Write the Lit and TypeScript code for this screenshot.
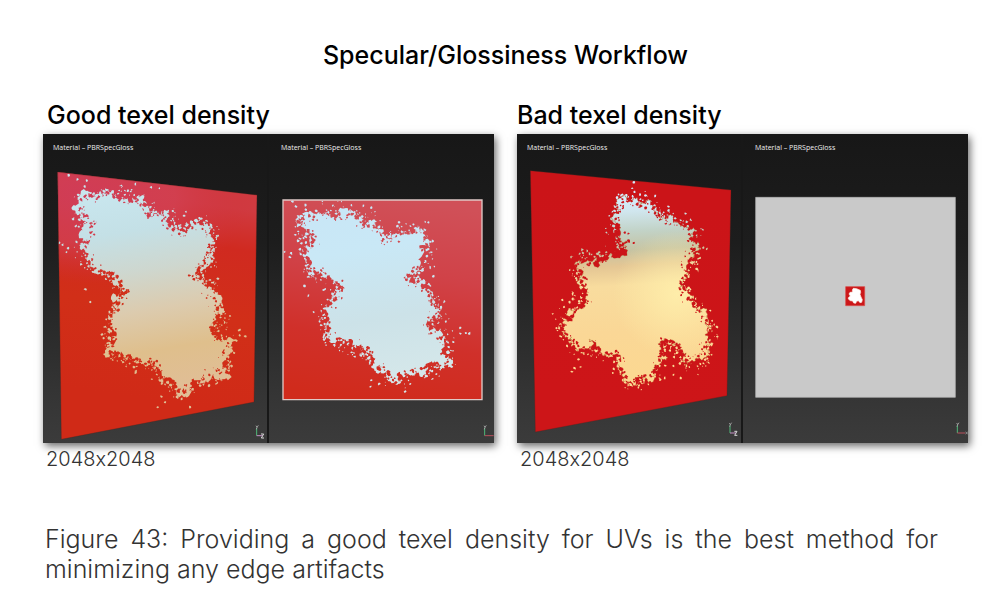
import { LitElement, html, svg, css } from "lit";
import { customElement, property } from "lit/decorators.js";

type Point = [number, number];

interface Scene {
  id: string;
  viewBox: string;
  label: string;
  surface: Point[];
  outline: Point[];
  specks: Point[];
  seed: number;
  axis: Point;
  axisLength: number;
  flat: boolean;
  soft: boolean;
}

// Small seeded generator, so that the splatter is the same on every load.
function randomFrom(seed: number): () => number {
  let s = seed;
  return () => {
    s = (s * 1664525 + 1013904223) % 4294967296;
    return s / 4294967296;
  };
}

// Breaks each side of a polygon into ever smaller jagged pieces.
function roughen(points: Point[], rnd: () => number, levels: number, amount: number): Point[] {
  let result = points;
  for (let level = 0; level < levels; level++) {
    const next: Point[] = [];
    result.forEach((a, i) => {
      const b = result[(i + 1) % result.length];
      const dx = b[0] - a[0];
      const dy = b[1] - a[1];
      const k = (rnd() - 0.5) * amount;
      next.push(a, [(a[0] + b[0]) / 2 - dy * k, (a[1] + b[1]) / 2 + dx * k]);
    });
    result = next;
  }
  return result;
}

const toPath = (points: Point[]) =>
  "M" + points.map((p) => p[0].toFixed(1) + " " + p[1].toFixed(1)).join("L") + "Z";

function blob(x: number, y: number, r: number, rnd: () => number): string {
  const corners: Point[] = [];
  for (let i = 0; i < 6; i++) {
    const a = (i / 6) * Math.PI * 2;
    const d = r * (0.5 + rnd() * 0.9);
    corners.push([x + Math.cos(a) * d, y + Math.sin(a) * d]);
  }
  return toPath(corners);
}

// Crumbs thrown off the outline: outside ones add paint, inside ones remove it.
function crumbs(points: Point[], rnd: () => number, perSide: number, inward: boolean): string {
  let d = "";
  points.forEach((a, i) => {
    const b = points[(i + 1) % points.length];
    const dx = b[0] - a[0];
    const dy = b[1] - a[1];
    const len = Math.hypot(dx, dy) || 1;
    const spread = 0.4 + rnd();
    for (let n = 0; n < perSide * (len / 30); n++) {
      const t = rnd();
      const far = rnd() ** 2.2 * (inward ? 20 : 32) * spread;
      const side = inward ? -1 : 1;
      const x = a[0] + dx * t + (dy / len) * far * side;
      const y = a[1] + dy * t - (dx / len) * far * side;
      const near = Math.max(0, 1 - far / 18);
      d += blob(x, y, 1.3 + rnd() ** 1.6 * (inward ? 2.6 : 2.4) + near * rnd() * 3.4, rnd);
    }
  });
  return d;
}

const goodTilted: Scene = {
  id: "good-tilted",
  viewBox: "9 198 672 861",
  label: "Perspective view of the splatter at good texel density",
  surface: [[53, 246], [651, 315], [642, 936], [64, 1048]],
  outline: [
    [108, 332], [150, 308], [156, 322], [180, 318], [184, 306], [210, 302], [240, 322], [250, 334], [290, 322],
    [315, 345], [324, 372], [345, 375], [370, 365], [385, 408], [410, 424], [440, 418], [452, 402], [490, 398],
    [515, 408], [518, 450], [510, 500], [500, 530], [470, 537], [480, 548], [450, 565], [490, 562], [500, 590],
    [525, 610], [530, 650], [550, 665], [530, 695], [515, 700], [520, 725], [550, 740], [570, 770], [562, 800],
    [565, 850], [520, 852], [490, 870], [450, 892], [430, 920], [405, 900], [400, 880], [360, 868], [348, 828],
    [336, 815], [310, 822], [290, 815], [260, 795], [230, 798], [210, 802], [215, 740], [205, 680], [235, 655],
    [240, 610], [268, 605], [245, 595], [230, 560], [180, 545], [150, 540], [145, 490], [130, 455], [152, 450],
    [150, 390], [120, 370],
  ],
  specks: [
    [85, 256], [112, 268], [140, 272], [134, 290], [58, 458], [68, 464], [80, 486], [84, 474], [110, 456],
    [136, 598], [150, 636], [186, 734], [190, 745], [286, 282], [333, 292], [358, 295], [438, 365], [432, 378],
    [482, 386], [530, 438], [534, 566], [598, 720], [600, 736], [616, 738], [588, 752], [574, 828], [582, 788],
    [376, 938], [354, 952], [450, 952], [508, 888], [364, 920], [282, 830], [286, 848],
    [100, 386], [116, 410], [126, 424], [108, 408], [136, 398], [128, 440], [118, 390],
  ],
  seed: 11,
  axis: [650, 1037],
  axisLength: 18,
  flat: false,
  soft: false,
};

const goodFlat: Scene = {
  id: "good-flat",
  viewBox: "27 198 675 861",
  label: "UV view of the splatter at good texel density",
  surface: [[69, 330], [666, 330], [666, 929], [69, 929]],
  outline: [
    [113, 395], [135, 372], [158, 376], [175, 380], [178, 366], [205, 362], [235, 382], [280, 370], [296, 380],
    [305, 402], [345, 405], [358, 420], [365, 440], [400, 442], [425, 432], [440, 425], [480, 420], [497, 428],
    [503, 470], [490, 535], [455, 540], [465, 552], [435, 566], [480, 565], [490, 595], [515, 610], [515, 640],
    [543, 655], [520, 685], [505, 690], [510, 712], [545, 740], [568, 760], [562, 800], [565, 832], [536, 828],
    [500, 830], [470, 846], [440, 850], [405, 880], [385, 850], [335, 828], [326, 790], [312, 772], [290, 785],
    [250, 750], [195, 752], [205, 700], [188, 655], [220, 635], [225, 605], [252, 600], [220, 580], [195, 550],
    [145, 545], [140, 500], [130, 480], [156, 478], [152, 440], [138, 412],
  ],
  specks: [
    [97, 335], [108, 350], [136, 346], [138, 358], [74, 486], [90, 502], [94, 490], [120, 478], [134, 588],
    [145, 617], [178, 694], [184, 706], [274, 345], [310, 348], [334, 352], [418, 396], [412, 408], [466, 414],
    [518, 453], [520, 558], [601, 714], [600, 730], [618, 728], [628, 730], [580, 756], [576, 814], [334, 870],
    [332, 890], [358, 882], [435, 905], [498, 858], [284, 800],
    [106, 434], [120, 446], [114, 452], [136, 440], [124, 460], [138, 458],
  ],
  seed: 11,
  axis: [674, 1037],
  axisLength: 27,
  flat: true,
  soft: false,
};

const badTilted: Scene = {
  id: "bad-tilted",
  viewBox: "21 201 672 861",
  label: "Perspective view of the splatter at bad texel density",
  surface: [[61, 245], [663, 303], [651, 920], [76, 1029]],
  outline: [
    [320, 345], [345, 322], [365, 335], [390, 350], [405, 345], [425, 342], [440, 370], [455, 392], [470, 382],
    [505, 395], [520, 410], [540, 415], [540, 440], [560, 460], [550, 490], [540, 520], [535, 550], [512, 580],
    [525, 600], [540, 630], [565, 660], [590, 680], [590, 710], [606, 730], [595, 760], [590, 800], [545, 830],
    [515, 810], [510, 780], [470, 755], [455, 790], [445, 830], [430, 862], [395, 866], [375, 890], [350, 880],
    [335, 850], [326, 800], [300, 800], [270, 780], [210, 785], [195, 770], [185, 745], [160, 730], [150, 710],
    [185, 682], [205, 650], [228, 620], [212, 590], [215, 560], [198, 530], [230, 508], [290, 500], [345, 480],
    [348, 455], [318, 440], [315, 395], [325, 370],
  ],
  specks: [
    [371, 279], [366, 298], [374, 308], [390, 316], [407, 320], [436, 322], [475, 352], [476, 364], [526, 374],
    [530, 398], [580, 475], [590, 480], [216, 482], [218, 492], [232, 486], [268, 490], [157, 632], [178, 640],
    [188, 630], [152, 742], [186, 848], [212, 834], [206, 812], [194, 838], [308, 852], [312, 840], [387, 890],
    [450, 872], [464, 866], [490, 858], [512, 866], [620, 714], [606, 696], [584, 812], [200, 572], [560, 540],
    [570, 508], [480, 784], [500, 792], [466, 830], [490, 830], [510, 824],
  ],
  seed: 37,
  axis: [660, 1032],
  axisLength: 18,
  flat: false,
  soft: true,
};

@customElement("splat-view")
export class SplatView extends LitElement {
  @property({ attribute: false }) scene!: Scene;

  static styles = css`
    :host { display: block; }
    .canvas { display: block; width: 100%; }
  `;

  render() {
    const s = this.scene;
    const rnd = randomFrom(s.seed);
    const body = toPath(roughen(s.outline, rnd, 4, 1.1));
    const outer = crumbs(s.outline, rnd, 7, false) + s.specks.map((p) => blob(p[0], p[1], 4, rnd)).join("");
    const inner = crumbs(s.outline, rnd, 5, true);
    const surface = toPath(s.surface);
    return html`
      <svg class="canvas" viewBox=${s.viewBox} role="img" aria-label=${s.label}>
        <defs>
          <linearGradient id="paper" gradientUnits="userSpaceOnUse" x1="420" y1="330" x2="330" y2="930">
            ${s.flat
              ? svg`<stop offset="0" stop-color="#d05058"/><stop offset=".35" stop-color="#d04248"/>
                    <stop offset=".7" stop-color="#d0302a"/><stop offset="1" stop-color="#d02b1c"/>`
              : s.soft
              ? svg`<stop offset="0" stop-color="#cb1418"/><stop offset="1" stop-color="#cd1518"/>`
              : svg`<stop offset="0" stop-color="#d03a40"/><stop offset=".2" stop-color="#d02a20"/>
                    <stop offset=".55" stop-color="#d12f18"/><stop offset="1" stop-color="#d02a17"/>`}
          </linearGradient>
          <radialGradient id="sheen" gradientUnits="userSpaceOnUse" cx="0" cy="0" r="1"
            gradientTransform="translate(120 310) rotate(4) scale(520 270)">
            <stop offset="0" stop-color="#d03c56"/>
            <stop offset=".55" stop-color="#d24052" stop-opacity=".8"/>
            <stop offset="1" stop-color="#d03038" stop-opacity="0"/>
          </radialGradient>
          <linearGradient id="paint" gradientUnits="userSpaceOnUse"
            x1=${s.soft ? 370 : 270} y1=${s.soft ? 320 : 300} x2=${s.soft ? 400 : 370} y2="900">
            ${s.flat
              ? svg`<stop offset="0" stop-color="#c8e6f6"/><stop offset=".3" stop-color="#c9e8f6"/>
                    <stop offset=".65" stop-color="#cce2e8"/><stop offset="1" stop-color="#d6e8ea"/>`
              : s.soft
              ? svg`<stop offset="0" stop-color="#d6ecfa"/><stop offset=".08" stop-color="#d0e6ee"/>
                    <stop offset=".18" stop-color="#c2d3c8"/><stop offset=".28" stop-color="#c5c3a3"/>
                    <stop offset=".36" stop-color="#e4c694"/><stop offset=".46" stop-color="#f8dc9e"/>
                    <stop offset=".7" stop-color="#fad796"/><stop offset="1" stop-color="#fcd890"/>`
              : svg`<stop offset="0" stop-color="#c8e6ee"/><stop offset=".2" stop-color="#c4e0e6"/>
                    <stop offset=".4" stop-color="#ced7cf"/><stop offset=".6" stop-color="#dccbae"/>
                    <stop offset=".8" stop-color="#dfbf8c"/><stop offset="1" stop-color="#e0be96"/>`}
          </linearGradient>
          <radialGradient id="glow" gradientUnits="userSpaceOnUse" cx="500" cy="615" r="190">
            <stop offset="0" stop-color="#fff0ac" stop-opacity=".85"/>
            <stop offset="1" stop-color="#fff0ac" stop-opacity="0"/>
          </radialGradient>
          <filter id="soften" x="-5%" y="-5%" width="110%" height="110%">
            <feGaussianBlur stdDeviation=${s.soft ? 2 : 0.8}/>
          </filter>
          <mask id="shape" maskUnits="userSpaceOnUse" x="0" y="190" width="710" height="880">
            <g filter="url(#soften)">
              <path d=${body} fill="#fff"/>
              <path d=${outer} fill="#fff"/>
              <path d=${inner} fill="#000"/>
            </g>
          </mask>
          <clipPath id="edge"><path d=${surface}/></clipPath>
        </defs>
        <path d=${surface} fill="url(#paper)"/>
        ${!s.flat && !s.soft ? svg`<path d=${surface} fill="url(#sheen)"/>` : null}
        <g clip-path="url(#edge)">
          <g mask="url(#shape)">
            <path d="M0 200H710V1060H0Z" fill="url(#paint)"/>
            ${s.soft
              ? svg`<path d="M0 200H710V1060H0Z" fill="url(#glow)"/>
                    <path d=${body} fill="none" stroke="#a87838" stroke-opacity=".45" stroke-width="3" filter="url(#soften)"/>`
              : null}
          </g>
        </g>
        ${s.flat
          ? svg`<path d=${surface} fill="none" stroke="#dfc9c6" stroke-width="4"/>`
          : svg`<path d=${surface} fill="none" stroke="#50201c" stroke-opacity=".5" stroke-width="2"/>`}
        <path d="M${s.axis[0]} ${s.axis[1]}v-22" stroke="#4fb878" stroke-width="3" fill="none"/>
        <path d="M${s.axis[0]} ${s.axis[1]}h${s.axisLength}" stroke=${s.flat ? "#b8505c" : "#c490c4"} stroke-width="3" fill="none"/>
        <path d="M${s.axis[0] - 2} ${s.axis[1] - 30}l3 5l4 -6m-4 6l-2 6" stroke="#c8c8c8" stroke-width="2" fill="none"/>
        ${s.flat
          ? null
          : svg`<path d="M${s.axis[0] + 13} ${s.axis[1] - 5}h8l-7 12h8" stroke="#d8d8d8" stroke-width="3" fill="none"/>`}
      </svg>
    `;
  }
}

@customElement("tiny-shell-view")
export class TinyShellView extends LitElement {
  static styles = css`
    :host { display: block; }
    .canvas { display: block; width: 100%; }
  `;

  render() {
    return html`
      <svg class="canvas" viewBox="9 201 675 861" role="img" aria-label="UV view with a very small shell">
        <path d="M47 325H646V925H47Z" fill="#c9c9c9" stroke="#b4b4b4" stroke-width="2"/>
        <path d="M317 593H374V650H317Z" fill="#cc1719" stroke="#d94a48" stroke-width="2"/>
        <path d="M337 603L340 598L350 599L361 604L362 610L360 616L363 624L367 632L365 640L360 641L355 635L350 637L347 643L341 642L338 636L331 635L325 630L325 626L331 621L327 615L330 610L338 609Z"
          fill="#fff" stroke="#fbeee4" stroke-width="2" stroke-linejoin="round"/>
        <path d="M652 1032v-22" stroke="#4fb878" stroke-width="3"/>
        <path d="M652 1032h24" stroke="#b8505c" stroke-width="3"/>
        <path d="M650 1002l3 5l4 -6m-4 6l-2 6" stroke="#c8c8c8" stroke-width="2" fill="none"/>
        <path d="M677 1028l6 8m0 -8l-6 8" stroke="#aaa" stroke-width="2"/>
      </svg>
    `;
  }
}

@customElement("app-root")
export class AppRoot extends LitElement {
  static styles = css`
    :host {
      display: block;
      background: #fff;
      color: #000;
      font-family: Inter, "Liberation Sans", sans-serif;
    }
    .page { margin: 0; padding: 39px 24px 24px 43px; }
    .title {
      margin: 0 0 28px;
      text-align: center;
      font-size: 25px;
      line-height: 32px;
      font-weight: 500;
    }
    .comparison {
      display: grid;
      grid-template-columns: 1fr 1fr;
      column-gap: 23px;
    }
    .heading {
      margin: 0;
      padding: 0 4px 3px;
      font-size: 25px;
      line-height: 32px;
      font-weight: 500;
    }
    .second .heading { padding-left: 0; }
    .panel {
      display: grid;
      grid-template-columns: 226fr 225fr;
      background: linear-gradient(#171717, #1d1d1d 35%, #353535 85%, #3b3b3b);
      box-shadow: 2px 3px 8px rgba(0, 0, 0, 0.6);
    }
    .view:first-child { border-right: 2px solid #181818; }
    .tag {
      margin: 0;
      padding: 8px 12px 2px;
      color: #eee;
      font: 400 7px/12px "Open Sans", "Noto Sans", sans-serif;
    }
    .view:first-child .tag { padding-left: 10px; }
    .size {
      margin: 0;
      padding: 3px 3px 2px;
      color: #333;
      font-size: 20px;
      line-height: 26px;
      font-weight: 300;
      font-feature-settings: "calt" 0;
    }
    .caption {
      margin: 50px 30px 0 2px;
      color: #333;
      font-size: 25px;
      line-height: 30px;
      font-weight: 300;
      text-align: justify;
    }
  `;

  render() {
    const tag = html`<p class="tag">Material – PBRSpecGloss</p>`;
    return html`
      <figure class="page">
        <h1 class="title">Specular/Glossiness Workflow</h1>
        <div class="comparison">
          <section class="first">
            <h2 class="heading">Good texel density</h2>
            <div class="panel">
              <div class="view">${tag}<splat-view .scene=${goodTilted}></splat-view></div>
              <div class="view">${tag}<splat-view .scene=${goodFlat}></splat-view></div>
            </div>
            <p class="size">2048x2048</p>
          </section>
          <section class="second">
            <h2 class="heading">Bad texel density</h2>
            <div class="panel">
              <div class="view">${tag}<splat-view .scene=${badTilted}></splat-view></div>
              <div class="view">${tag}<tiny-shell-view></tiny-shell-view></div>
            </div>
            <p class="size">2048x2048</p>
          </section>
        </div>
        <figcaption class="caption">
          Figure 43: Providing a good texel density for UVs is the best method for minimizing any edge artifacts
        </figcaption>
      </figure>
    `;
  }
}
